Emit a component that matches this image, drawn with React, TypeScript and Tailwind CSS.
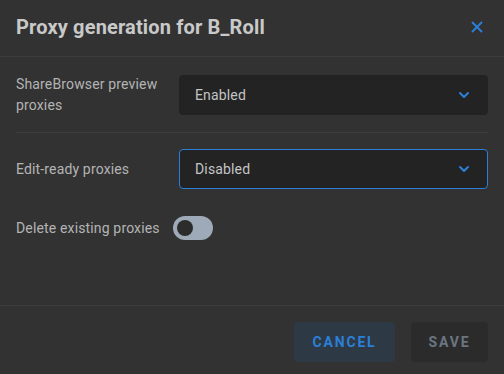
import { X, ChevronDown } from 'lucide-react';

type SelectProps = { value: string; focused?: boolean };

const SelectBox = ({ value, focused }: SelectProps) => (
  <div
    className={`flex h-10 flex-1 items-center justify-between rounded-[4px] bg-[#232323] pl-[15px] pr-[15px] text-[14px] tracking-[0.15px] text-[#c4c4c4] ${
      focused ? 'border border-[#2b7fd6]' : 'border border-transparent'
    }`}
  >
    <span>{value}</span>
    <ChevronDown className="h-4 w-4 text-[#2b7fd6]" strokeWidth={3} />
  </div>
);

const Toggle = () => (
  <div className="flex h-6 w-10 items-center rounded-full bg-[#9eaab8] pl-[4px]">
    <div className="h-[16px] w-[16px] rounded-full bg-[#2c2c2c]" />
  </div>
);

export default function App() {
  return (
    <div
      className="flex h-[374px] w-full flex-col bg-[#323232] text-[#b4b4b4]"
      style={{ fontFamily: 'Roboto, "Noto Sans", sans-serif' }}
    >
      <div className="flex h-[57px] items-center justify-between border-b border-[#3c3c3c] px-4 pb-[3px]">
        <h1 className="text-[20px] font-bold tracking-[0.15px] text-[#c9c9c9]">Proxy generation for B_Roll</h1>
        <X className="mr-[2px] h-[18px] w-[18px] text-[#2b7fd6]" strokeWidth={2.5} />
      </div>

      <div className="flex-1 px-4">
        <div className="flex items-center pt-[17px]">
          <div className="w-[163px] text-[14px] leading-[21px] tracking-[0.15px]">
            ShareBrowser preview
            <br />
            proxies
          </div>
          <SelectBox value="Enabled" />
        </div>
        <div className="mt-[16px] border-t border-[#3c3c3c]" />

        <div className="flex items-center pt-[16px]">
          <div className="w-[163px] text-[14px] leading-[21px] tracking-[0.15px]">Edit-ready proxies</div>
          <SelectBox value="Disabled" focused />
        </div>

        <div className="flex items-center gap-[13px] pt-[27px]">
          <div className="text-[14px] leading-[21px] tracking-[0.15px]">Delete existing proxies</div>
          <Toggle />
        </div>
      </div>

      <div className="flex h-[69px] items-start justify-end gap-4 border-t border-[#3c3c3c] px-4 pt-[16px]">
        <button className="h-10 w-[101px] rounded-[4px] bg-[#2e3946] text-[14px] font-bold tracking-[0.13em] text-[#2b7fd6]">
          CANCEL
        </button>
        <button className="h-10 w-[77px] rounded-[4px] bg-[#2b2b2b] text-[14px] font-bold tracking-[0.13em] text-[#6b7682]">
          SAVE
        </button>
      </div>
    </div>
  );
}
